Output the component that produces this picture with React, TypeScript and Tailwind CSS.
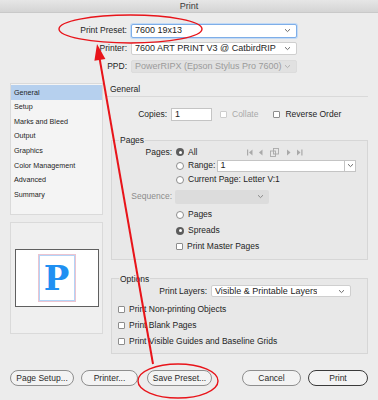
import React from "react";

const Chevron = ({ color = "#6b6b6b" }: { color?: string }) => (
  <svg width="7" height="5" viewBox="0 0 7 5" className="shrink-0">
    <path d="M1 1.2 L3.5 3.6 L6 1.2" fill="none" stroke={color} strokeWidth="1" />
  </svg>
);

interface SelectProps {
  value: string;
  className?: string;
  focus?: boolean;
  disabled?: boolean;
}

const Select: React.FC<SelectProps> = ({ value, className, focus, disabled }) => (
  <div
    className={`flex items-center justify-between rounded-[2px] pl-[3px] pr-[5px] text-[9px] ${
      disabled
        ? "bg-[#e1e1e1] text-[#9b9b9b] border border-[#dcdcdc]"
        : focus
        ? "bg-white border border-[#7eaee8] shadow-[0_0_0_1px_#c3daf5]"
        : "bg-white border border-[#cfcfcf]"
    } ${className ?? ""}`}
  >
    <span className="truncate">{value}</span>
    <Chevron color={disabled ? "#b0b0b0" : "#6b6b6b"} />
  </div>
);

const Radio = ({ checked }: { checked?: boolean }) =>
  checked ? (
    <span className="w-[8px] h-[8px] rounded-full bg-[#5d5d5d] flex items-center justify-center shrink-0">
      <span className="w-[3px] h-[3px] rounded-full bg-white" />
    </span>
  ) : (
    <span className="w-[8px] h-[8px] rounded-full bg-white border border-[#8d8d8d] shrink-0" />
  );

const Checkbox = ({ disabled }: { disabled?: boolean }) => (
  <span
    className={`w-[7px] h-[7px] rounded-[1px] bg-white border shrink-0 ${
      disabled ? "border-[#cdcdcd]" : "border-[#8d8d8d]"
    }`}
  />
);

const NavIcons = () => (
  <svg width="57" height="9" viewBox="0 0 57 9" className="shrink-0">
    <g fill="#a9a9a9">
      <rect x="0" y="1.5" width="1.2" height="6" />
      <path d="M5.5 1.5 L2 4.5 L5.5 7.5 Z" />
      <path d="M15.5 1.5 L12 4.5 L15.5 7.5 Z" />
      <path d="M40 1.5 L43.5 4.5 L40 7.5 Z" />
      <path d="M50 1.5 L53.5 4.5 L50 7.5 Z" />
      <rect x="54.3" y="1.5" width="1.2" height="6" />
    </g>
    <g fill="none" stroke="#a9a9a9" strokeWidth="0.9">
      <rect x="23.5" y="3" width="5" height="5.5" />
      <rect x="26.5" y="0.5" width="5" height="5.5" />
    </g>
  </svg>
);

const Button = ({ label, className, primary }: { label: string; className?: string; primary?: boolean }) => (
  <div
    className={`h-[16px] flex items-center justify-center rounded-full bg-[#f3f3f3] text-[8.5px] text-[#2a2a2a] ${
      primary ? "border-[1.5px] border-[#3b3b3b]" : "border border-[#8e8e8e]"
    } ${className ?? ""}`}
  >
    {label}
  </div>
);

const sections = [
  "General",
  "Setup",
  "Marks and Bleed",
  "Output",
  "Graphics",
  "Color Management",
  "Advanced",
  "Summary",
];

export default function App() {
  return (
    <div className="relative w-[378px] h-[400px] overflow-hidden bg-[#ececec] font-['Liberation_Sans',Arial,sans-serif] text-[8.5px] leading-none text-[#1e1e1e]">
      {/* title bar */}
      <div className="h-[13px] flex items-center justify-center border-b border-[#c9c9c9] bg-gradient-to-b from-[#e6e6e6] to-[#d4d4d4] text-[9px] text-[#3a3a3a]">
        Print
      </div>

      {/* preset / printer / ppd */}
      <div className="pt-[11px] flex flex-col gap-[5px]">
        <div className="flex items-center gap-[4px] h-[13px]">
          <span className="w-[127px] text-right">Print Preset:</span>
          <Select value="7600 19x13" focus className="w-[166px] h-[14px]" />
        </div>
        <div className="flex items-center gap-[4px] h-[13px]">
          <span className="w-[127px] text-right">Printer:</span>
          <Select value="7600 ART PRINT V3 @ CatbirdRIP" className="w-[166px] h-[13px]" />
        </div>
        <div className="flex items-center gap-[4px] h-[13px]">
          <span className="w-[127px] text-right">PPD:</span>
          <Select value="PowerRIPX (Epson Stylus Pro 7600)" disabled className="w-[166px] h-[13px]" />
        </div>
      </div>

      {/* main */}
      <div className="mt-[10px] px-[10px] flex gap-[3px]">
        {/* sidebar */}
        <div className="w-[93px] flex flex-col gap-[7px]">
          <div className="h-[132px] bg-[#f4f4f4] border border-[#dadada] pt-[1px] text-[7.2px]">
            {sections.map((s, i) => (
              <div
                key={s}
                className={`h-[14.6px] flex items-center pl-[3px] ${i === 0 ? "bg-[#b6d0ee]" : ""}`}
              >
                {s}
              </div>
            ))}
          </div>
          <div className="h-[112px] bg-[#efefef] border border-[#dadada] flex items-center justify-center">
            <div className="w-[84px] h-[58px] bg-white border border-[#5f5f5f] flex items-center justify-center">
              <div className="w-[38px] h-[48px] bg-white border border-[#ecc4d0] shadow-[inset_0_0_0_1px_#b3d4f7] flex items-center justify-center">
                <span className="font-['DejaVu_Serif',serif] font-semibold text-[34px] leading-none text-[#1f90f2]">P</span>
              </div>
            </div>
          </div>
        </div>

        {/* content */}
        <div className="flex-1 flex flex-col">
          <div className="h-[14px] flex items-center pl-[4px] border-b border-[#d9d9d9]">General</div>

          <div className="mt-[11px] h-[13px] flex items-center">
            <span className="w-[61px] text-right">Copies:</span>
            <div className="ml-[4px] w-[41px] h-[13px] bg-white border border-[#c4c4c4] flex items-center pl-[3px] text-[9px]">
              1
            </div>
            <span className="ml-[8px] flex items-center gap-[5px] text-[#a9a9a9]">
              <Checkbox disabled />
              Collate
            </span>
            <span className="ml-[15px] flex items-center gap-[5px]">
              <Checkbox />
              Reverse Order
            </span>
          </div>

          {/* pages group */}
          <fieldset className="mt-[15px] ml-[5px] border border-[#d6d6d6] bg-[#e8e8e8] pl-[7px] pb-[4px]">
            <legend className="px-[1px]">Pages</legend>
            <div className="pt-[1px] flex items-center h-[14px]">
              <span className="w-[53px] text-right">Pages:</span>
              <span className="ml-[4px] w-[71px] flex items-center gap-[4px]">
                <Radio checked />
                All
              </span>
              <NavIcons />
            </div>
            <div className="flex items-center h-[14px]">
              <span className="ml-[57px] flex items-center gap-[4px]">
                <Radio />
                Range:
              </span>
              <div className="ml-[2px] flex h-[12px]">
                <div className="w-[128px] bg-white border border-[#c4c4c4] flex items-center pl-[2px] text-[9px]">1</div>
                <div className="w-[11px] bg-white border border-l-0 border-[#c4c4c4] flex items-center justify-center">
                  <Chevron />
                </div>
              </div>
            </div>
            <div className="flex items-center h-[14px]">
              <span className="ml-[57px] flex items-center gap-[4px]">
                <Radio />
                Current Page: Letter V:1
              </span>
            </div>
            <div className="mt-[3px] flex items-center h-[14px]">
              <span className="w-[53px] text-right text-[#8c8c8c]">Sequence:</span>
              <div className="ml-[3px] w-[94px] h-[14px] rounded-[2px] bg-[#dcdcdc] flex items-center justify-end pr-[5px]">
                <Chevron color="#8a8a8a" />
              </div>
            </div>
            <div className="mt-[3px] pl-[57px] flex flex-col">
              <span className="h-[16px] flex items-center gap-[4px]">
                <Radio />
                Pages
              </span>
              <span className="h-[16px] flex items-center gap-[4px]">
                <Radio checked />
                Spreads
              </span>
              <span className="h-[16px] flex items-center gap-[4px]">
                <Checkbox />
                Print Master Pages
              </span>
            </div>
          </fieldset>

          {/* options group */}
          <fieldset className="mt-[15px] ml-[5px] border border-[#d6d6d6] bg-[#e8e8e8] pl-[7px] pb-[4px]">
            <legend className="px-[1px]">Options</legend>
            <div className="mt-[2px] flex items-center h-[12px]">
              <span className="w-[88px] text-right">Print Layers:</span>
              <Select value="Visible & Printable Layers" className="ml-[4px] w-[140px] h-[12px]" />
            </div>
            <div className="mt-[4px] -ml-[1px] flex flex-col">
              {["Print Non-printing Objects", "Print Blank Pages", "Print Visible Guides and Baseline Grids"].map((t) => (
                <span key={t} className="h-[16px] flex items-center gap-[4px]">
                  <Checkbox />
                  {t}
                </span>
              ))}
            </div>
          </fieldset>
        </div>
      </div>

      {/* buttons */}
      <div className="mt-[16px] px-[10px] flex items-center">
        <Button label="Page Setup..." className="w-[64px]" />
        <Button label="Printer..." className="ml-[7px] w-[57px]" />
        <Button label="Save Preset..." className="ml-[9px] w-[65px]" />
        <Button label="Cancel" className="ml-[30px] w-[59px]" />
        <Button label="Print" primary className="ml-[7px] w-[60px]" />
      </div>

      {/* red annotations */}
      <svg className="absolute inset-0 pointer-events-none" width="378" height="400" viewBox="0 0 378 400">
        <ellipse cx="130.5" cy="29" rx="71.5" ry="14" fill="none" stroke="#e8141a" strokeWidth="1.4" />
        <ellipse cx="178" cy="381" rx="40" ry="17" fill="none" stroke="#e8141a" strokeWidth="1.4" />
        <line x1="153" y1="364" x2="99.5" y2="58" stroke="#e8141a" strokeWidth="2" />
        <polygon points="97,44 105.4,58.9 94.4,60.8" fill="#e8141a" />
      </svg>
    </div>
  );
}
